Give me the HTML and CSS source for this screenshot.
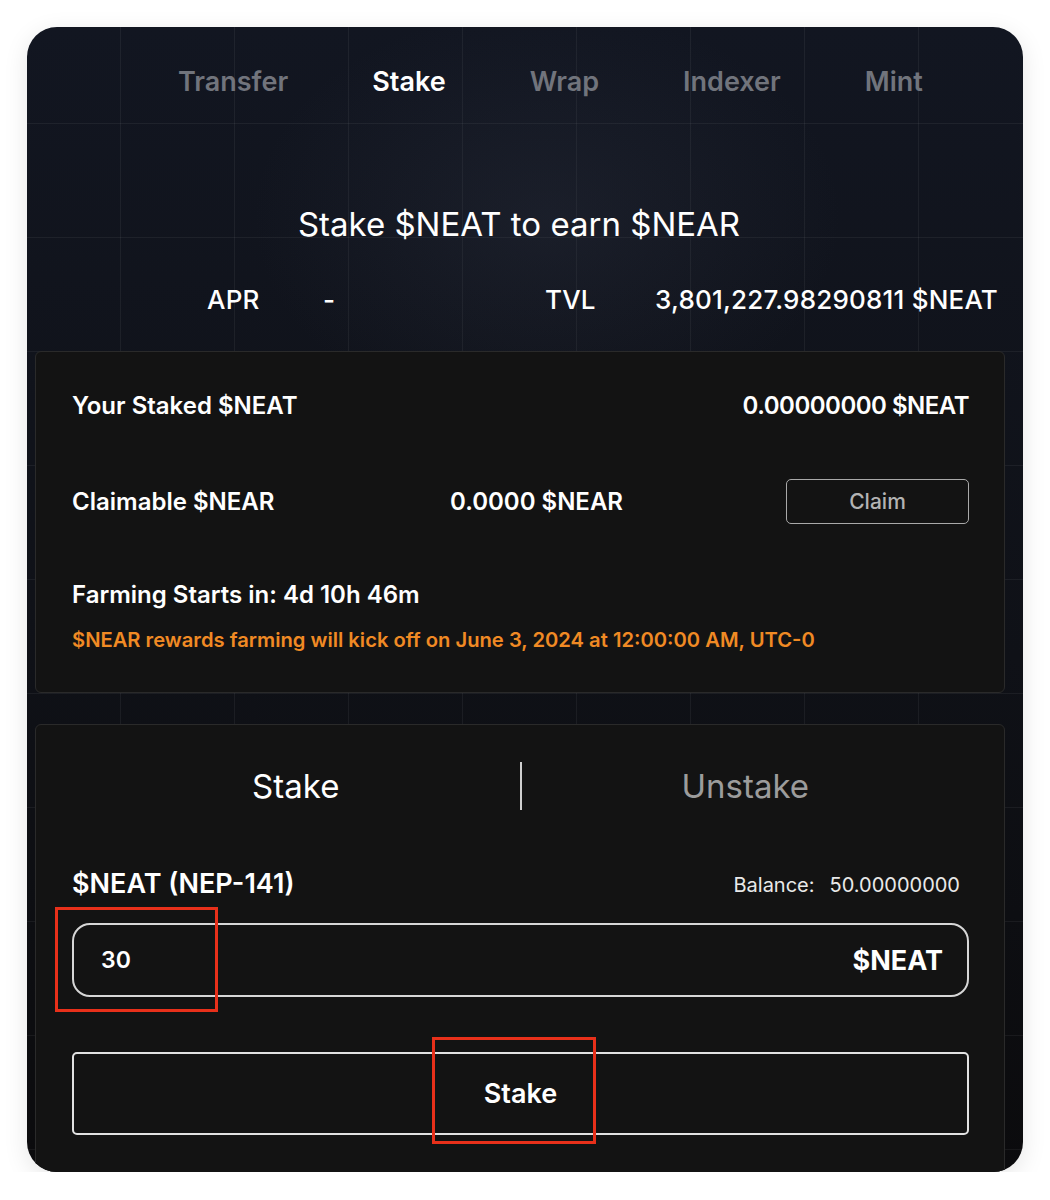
FILE: index.html
```html
<!DOCTYPE html>
<html lang="en">
<head>
<meta charset="utf-8">
<title>Stake $NEAT</title>
<link rel="stylesheet" href="styles.css">
</head>
<body>
<div class="panel">
  <nav class="nav">
    <a class="nav-item">Transfer</a>
    <a class="nav-item active">Stake</a>
    <a class="nav-item">Wrap</a>
    <a class="nav-item">Indexer</a>
    <a class="nav-item">Mint</a>
  </nav>

  <h1 class="title">Stake $NEAT to earn $NEAR</h1>

  <div class="stats">
    <span class="stat-label">APR</span>
    <span class="stat-value">-</span>
    <span class="stat-label">TVL</span>
    <span class="stat-value">3,801,227.98290811 $NEAT</span>
  </div>

  <section class="card info">
    <div class="row row-staked">
      <span>Your Staked $NEAT</span>
      <span>0.00000000 $NEAT</span>
    </div>
    <div class="row row-claim">
      <span class="claim-label">Claimable $NEAR</span>
      <span class="claim-value">0.0000 $NEAR</span>
      <button class="btn-claim">Claim</button>
    </div>
    <div class="farming">Farming Starts in: 4d 10h 46m</div>
    <div class="notice">$NEAR rewards farming will kick off on June 3, 2024 at 12:00:00 AM, UTC-0</div>
  </section>

  <section class="card action">
    <div class="switch">
      <span class="switch-item active">Stake</span>
      <span class="switch-divider"></span>
      <span class="switch-item">Unstake</span>
    </div>
    <div class="token-row">
      <span class="token-name">$NEAT (NEP-141)</span>
      <span class="balance"><span class="balance-label">Balance:</span><span>50.00000000</span></span>
    </div>
    <div class="amount">
      <span class="amount-value">30</span>
      <span class="amount-unit">$NEAT</span>
    </div>
    <button class="btn-stake">Stake</button>
    <span class="mark mark-input"></span>
    <span class="mark mark-button"></span>
  </section>
</div>
</body>
</html>
```

FILE: styles.css
```css
* { box-sizing: border-box; }

html, body {
  margin: 0;
  background: #ffffff;
}

body {
  padding: 27px 27px 0 27px;
  font-family: Inter, "Liberation Sans", sans-serif;
  color: #ffffff;
}

/* dark rounded frame with a faint square grid */
.panel {
  width: 996px;
  height: 1145px;
  border-radius: 30px;
  overflow: hidden;
  padding: 0 18px 0 8px;
  background-color: #10131b;
  background-image:
    radial-gradient(ellipse 420px 300px at 520px 190px, rgba(60, 66, 84, 0.22), transparent 70%),
    linear-gradient(to right, rgba(255, 255, 255, 0.055) 1px, transparent 1px),
    linear-gradient(to bottom, rgba(255, 255, 255, 0.055) 1px, transparent 1px),
    linear-gradient(to bottom, #121621 0%, #0f1117 55%, #0b0b0d 100%);
  background-size: 100% 100%, 114px 114px, 114px 114px, 100% 100%;
  background-position: 0 0, 93px 96px, 93px 96px, 0 0;
  box-shadow: 0 6px 24px rgba(0, 0, 0, 0.10);
}

.nav {
  display: flex;
  gap: 84px;
  height: 110px;
  align-items: center;
  padding: 0 0 2px 143px;
}

.nav-item {
  font-size: 27px;
  font-weight: 600;
  color: #71747c;
  letter-spacing: 0;
}

.nav-item.active { color: #ffffff; }

.title {
  margin: 0;
  padding-top: 62px;
  height: 150px;
  text-align: center;
  font-size: 33px;
  font-weight: 400;
  letter-spacing: 0;
  line-height: 50px;
  padding-right: 2px;
}

.stats {
  display: grid;
  grid-template-columns: 116px 222px 110px auto;
  padding-left: 172px;
  height: 64px;
  font-size: 26px;
  font-weight: 500;
  line-height: 26px;
  letter-spacing: 0.2px;
}

.card {
  width: 970px;
  background: #131313;
  border: 1px solid #2a2a2a;
  border-radius: 6px;
}

/* staked summary */
.info {
  height: 342px;
  padding: 30px 35px 0 36px;
}

.row {
  display: flex;
  align-items: center;
  font-size: 24px;
  font-weight: 600;
  letter-spacing: 0;
}

.row-staked {
  justify-content: space-between;
  height: 46px;
}

.row-staked span:last-child { letter-spacing: -0.5px; }

.row-claim {
  margin-top: 51px;
  height: 45px;
}

.claim-label { width: 378px; }

.claim-value { flex: 1; }

.btn-claim {
  width: 183px;
  height: 45px;
  background: transparent;
  border: 1.5px solid #a9a9a9;
  border-radius: 5px;
  color: #b3b3b3;
  font-family: inherit;
  font-size: 21px;
  font-weight: 500;
}

.farming {
  margin-top: 56px;
  font-size: 24px;
  font-weight: 600;
  line-height: 30px;
  letter-spacing: 0;
}

.notice {
  margin-top: 17px;
  font-size: 20.2px;
  font-weight: 600;
  line-height: 26px;
  color: #f08a24;
  letter-spacing: 0;
}

/* stake / unstake form */
.action {
  position: relative;
  margin-top: 31px;
  height: 470px;
  padding: 37px 35px 0 36px;
}

.switch {
  display: flex;
  align-items: center;
  height: 48px;
}

.switch-item {
  flex: 1;
  text-align: center;
  font-size: 33px;
  font-weight: 400;
  color: #9c9c9c;
  letter-spacing: 0;
}

.switch-item.active { color: #ffffff; }

.switch-divider {
  width: 2px;
  height: 48px;
  background: #cfcfcf;
}

.token-row {
  display: flex;
  justify-content: space-between;
  align-items: center;
  margin-top: 56px;
  height: 34px;
  padding-right: 9px;
}

.token-name {
  font-size: 27px;
  font-weight: 600;
  letter-spacing: 0;
}

.balance {
  display: flex;
  gap: 15px;
  font-size: 20px;
  font-weight: 400;
  color: #e9e9e9;
  padding-top: 4px;
}

.amount {
  display: flex;
  justify-content: space-between;
  align-items: center;
  margin-top: 23px;
  height: 74px;
  padding: 0 24px 0 27px;
  border: 2px solid #d6d6d6;
  border-radius: 18px;
}

.amount-value {
  font-size: 23px;
  font-weight: 600;
}

.amount-unit {
  font-size: 27px;
  font-weight: 700;
  letter-spacing: 0;
}

.btn-stake {
  display: block;
  width: 100%;
  height: 83px;
  margin-top: 55px;
  background: transparent;
  border: 2px solid #e2e2e2;
  border-radius: 5px;
  color: #ffffff;
  font-family: inherit;
  font-size: 27px;
  font-weight: 600;
  letter-spacing: 0;
}

/* red highlight frames drawn over the input and the button */
.mark {
  position: absolute;
  border: 3px solid #e8301a;
}

.mark-input {
  left: 19px;
  top: 182px;
  width: 163px;
  height: 105px;
}

.mark-button {
  left: 396px;
  top: 312px;
  width: 164px;
  height: 107px;
}
```
